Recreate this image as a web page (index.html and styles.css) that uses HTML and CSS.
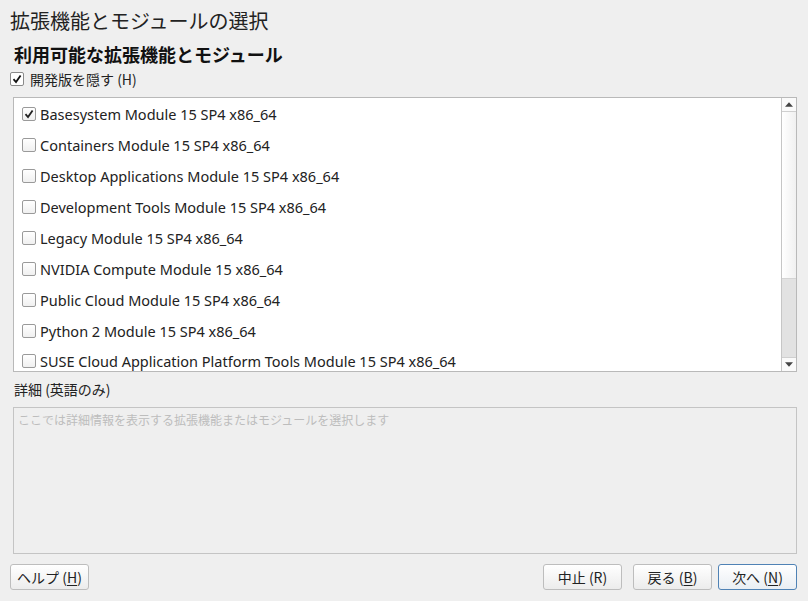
FILE: index.html
```html
<!DOCTYPE html>
<html lang="ja">
<head>
<meta charset="utf-8">
<link rel="stylesheet" href="styles.css">
</head>
<body>
<div class="page">
  <h1 class="title">拡張機能とモジュールの選択</h1>
  <h2 class="subtitle">利用可能な拡張機能とモジュール</h2>
  <label class="hide-dev"><span class="cb small checked"><svg viewBox="0 0 12 12"><path d="M2.5 6.2 L5 9 L9.6 2.4" fill="none" stroke="#111" stroke-width="1.8"/></svg></span>開発版を隠す (H)</label>
  <div class="listbox">
    <div class="rows">
      <div class="row"><span class="cb checked"><svg viewBox="0 0 12 12"><path d="M2.5 6.2 L5 9 L9.6 2.4" fill="none" stroke="#222" stroke-width="1.8"/></svg></span>Basesystem Module 15 SP4 x86_64</div>
      <div class="row"><span class="cb"></span>Containers Module 15 SP4 x86_64</div>
      <div class="row"><span class="cb"></span>Desktop Applications Module 15 SP4 x86_64</div>
      <div class="row"><span class="cb"></span>Development Tools Module 15 SP4 x86_64</div>
      <div class="row"><span class="cb"></span>Legacy Module 15 SP4 x86_64</div>
      <div class="row"><span class="cb"></span>NVIDIA Compute Module 15 x86_64</div>
      <div class="row"><span class="cb"></span>Public Cloud Module 15 SP4 x86_64</div>
      <div class="row"><span class="cb"></span>Python 2 Module 15 SP4 x86_64</div>
      <div class="row last"><span class="cb"></span>SUSE Cloud Application Platform Tools Module 15 SP4 x86_64</div>
    </div>
    <div class="scrollbar">
      <div class="arrow"><svg viewBox="0 0 9 5"><path d="M0 5 L4.5 0 L9 5 Z" fill="#444"/></svg></div>
      <div class="thumb"></div>
      <div class="track"></div>
      <div class="arrow"><svg viewBox="0 0 9 5"><path d="M0 0 L4.5 5 L9 0 Z" fill="#444"/></svg></div>
    </div>
  </div>
  <div class="detail-label">詳細 (英語のみ)</div>
  <div class="details">ここでは詳細情報を表示する拡張機能またはモジュールを選択します</div>
  <div class="buttons">
    <button class="btn">ヘルプ (<u>H</u>)</button>
    <div class="spacer"></div>
    <button class="btn">中止 (R)</button>
    <button class="btn gap">戻る (<u>B</u>)</button>
    <button class="btn primary">次へ (<u>N</u>)</button>
  </div>
</div>
</body>
</html>
```

FILE: styles.css
```css
html, body {
  margin: 0;
  padding: 0;
  background: #efefef;
}
body {
  font-family: "Noto Sans", "Noto Sans CJK JP", sans-serif;
  color: #1a1a1a;
  width: 808px;
  height: 601px;
  overflow: hidden;
}
.page {
  display: flex;
  flex-direction: column;
  padding: 0 11px 0 10px;
}
.title {
  margin: 0;
  font-family: "Noto Sans CJK JP", sans-serif;
  font-weight: 400;
  font-size: 20px;
  line-height: 24px;
  padding-top: 9px;
  color: #222;
}
.subtitle {
  margin: 0;
  font-family: "Noto Sans CJK JP", sans-serif;
  font-weight: 700;
  font-size: 18px;
  line-height: 22px;
  padding: 10px 0 0 4px;
  color: #111;
}
.hide-dev {
  display: flex;
  align-items: center;
  font-family: "Noto Sans CJK JP", sans-serif;
  font-size: 14px;
  line-height: 18px;
  margin-top: 5px;
  color: #222;
}
.cb {
  width: 12px;
  height: 12px;
  border: 1px solid #9a9a9a;
  border-radius: 2px;
  background: linear-gradient(#ffffff, #f0f0f0);
  display: inline-flex;
  align-items: center;
  justify-content: center;
  margin-right: 4px;
  flex: none;
}
.cb svg {
  width: 12px;
  height: 12px;
}
.cb.small {
  background: #fff;
  border-color: #8a8a8a;
  margin-right: 6px;
}
.listbox {
  margin: 9px 0 0 3px;
  height: 273px;
  border: 1px solid #b9b9b9;
  background: #fff;
  display: flex;
  overflow: hidden;
}
.rows {
  flex: 1;
  overflow: hidden;
}
.row {
  height: 31px;
  display: flex;
  align-items: center;
  padding-left: 8px;
  font-size: 14.5px;
  color: #222;
  white-space: nowrap;
}
.row.last {
  height: 25px;
  box-sizing: border-box;
  align-items: flex-start;
  padding-top: 5px;
}
.row.last .cb { margin-top: 3px; }
.scrollbar {
  width: 14px;
  border-left: 1px solid #c6c6c6;
  display: flex;
  flex-direction: column;
  background: #f6f6f6;
}
.arrow {
  height: 13px;
  display: flex;
  align-items: center;
  justify-content: center;
  background: #fafafa;
}
.arrow:first-child { border-bottom: 1px solid #cfcfcf; }
.arrow:last-child { border-top: 1px solid #cfcfcf; }
.arrow svg { width: 8px; height: 5px; }
.thumb {
  height: 166px;
  background: linear-gradient(90deg, #ffffff, #f0f0f0);
  border-bottom: 1px solid #d4d4d4;
}
.track {
  flex: 1;
  background: #e2e2e2;
}
.detail-label {
  font-family: "Noto Sans CJK JP", sans-serif;
  font-size: 14px;
  line-height: 18px;
  margin: 8px 0 0 4px;
  color: #222;
}
.details {
  margin: 9px 0 0 3px;
  height: 141px;
  border: 1px solid #c4c4c4;
  padding: 4px 4px 0 4px;
  font-family: "Noto Sans CJK JP", sans-serif;
  font-size: 12px;
  line-height: 15px;
  color: #bdbdbd;
}
.buttons {
  display: flex;
  margin-top: 10px;
}
.spacer { flex: 1; }
.btn {
  width: 79px;
  height: 26px;
  border: 1px solid #bdbdbd;
  border-radius: 3px;
  background: linear-gradient(#ffffff, #ececec);
  font-family: "Noto Sans CJK JP", sans-serif;
  font-size: 14px;
  color: #222;
  padding: 0;
  margin-right: 11px;
}
.btn.gap { margin-right: 6px; }
.btn.primary {
  border-color: #4f82b5;
  margin-right: 0;
  background: linear-gradient(#ffffff, #e9eef3);
}
.btn u { text-decoration-thickness: 1px; text-underline-offset: 2px; }
```
